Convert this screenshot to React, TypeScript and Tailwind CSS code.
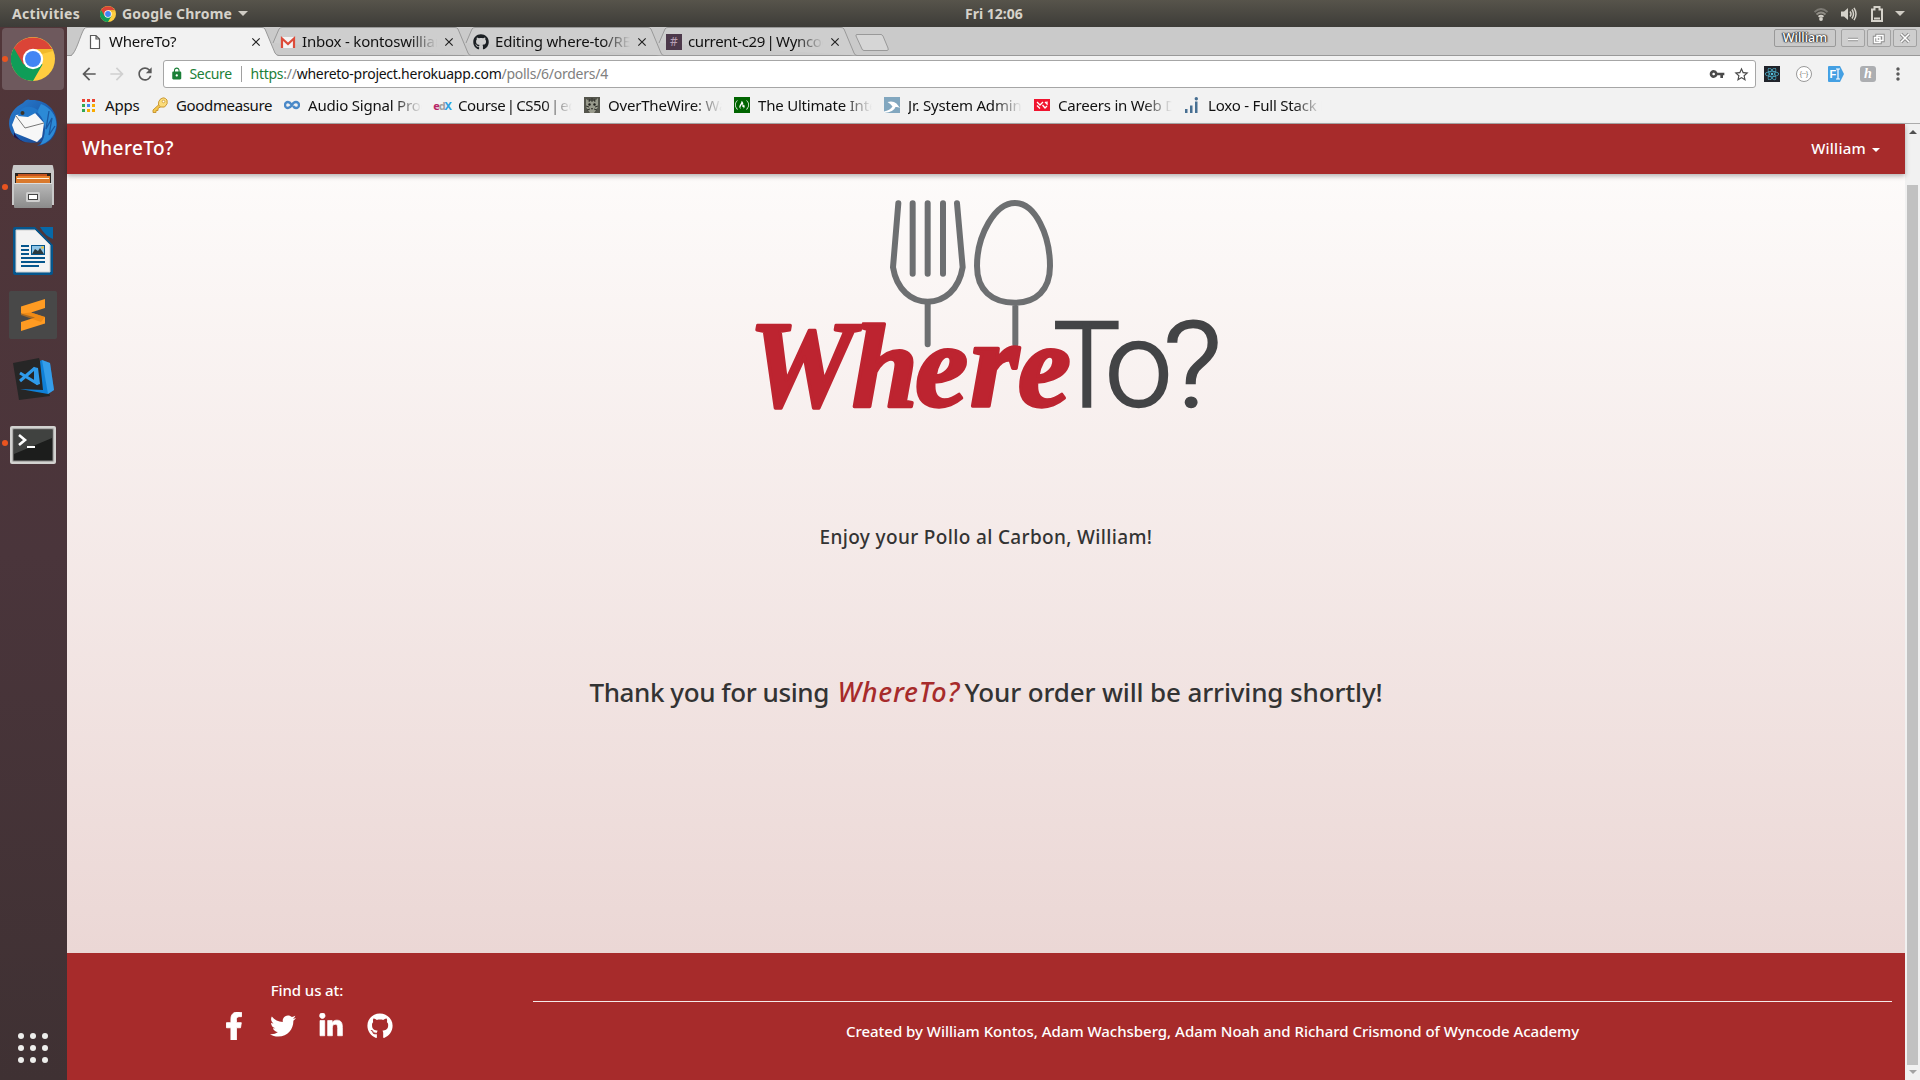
import type { ReactNode } from "react";
import { FaFacebookF, FaGithub, FaLinkedinIn, FaReact, FaTwitter, FaFreeCodeCamp } from "react-icons/fa";
import { MdArrowBack, MdArrowForward, MdRefresh, MdLock, MdStarBorder, MdVpnKey, MdMoreVert, MdClose } from "react-icons/md";

function ChromeLogo({ className }: { className: string }) {
  return (
    <svg viewBox="0 0 44 44" className={className}>
      <circle cx="22" cy="22" r="22" fill="#ffcd40" />
      <path d="M22 22 L2.9 11 A22 22 0 0 0 22 44 L31.5 27.5 Z" fill="#0f9d58" />
      <path d="M22 22 L12.5 27.5 L2.9 11 A22 22 0 0 1 41.1 12 L22 12 Z" fill="#db4437" />
      <path d="M22 12 H41.1 L42 14 L31 17Z" fill="#f1b92b" />
      <circle cx="22" cy="22" r="10.2" fill="#fff" />
      <circle cx="22" cy="22" r="8" fill="#4285f4" />
    </svg>
  );
}

function ThunderbirdIcon() {
  return (
    <svg viewBox="0 0 48 48" className="size-12">
      <defs>
        <linearGradient id="tb" x1="0" y1="0" x2="1" y2="1">
          <stop offset="0" stopColor="#2a7fd0" />
          <stop offset="0.5" stopColor="#1d5fb0" />
          <stop offset="1" stopColor="#1b3f86" />
        </linearGradient>
      </defs>
      <path d="M14 4 C17 0 20 0 21 1 C36 0 48 10 48 25 C48 37 40 46 28 47 L33 43 C17 46 1 41 0 25 C0 15 6 8 14 4Z" fill="url(#tb)" />
      <path d="M32 5 C43 9 49 19 47 29 C45 38 39 44 31 46 C38 36 38 22 28 13Z" fill="#2c8ad6" />
      <path d="M40 12 L37 30 L43 19 L40 36 L46 27" fill="none" stroke="#1a58a2" strokeWidth="1.3" />
      <path d="M5 33 C8 40 14 42 16 44 L5 38Z" fill="#1f1650" />
      <path d="M7 16 L26 14 L35 24 L33 38 L28 43 L6 34 L3 26Z" fill="#f7f7f7" />
      <path d="M7 17 L16 29 L35 24" fill="none" stroke="#777" strokeWidth="1" />
      <path d="M11 12 C15 6 24 7 30 12 L19 18 L9 17Z" fill="#2277c9" />
      <circle cx="13.5" cy="14" r="2" fill="#3a3328" />
    </svg>
  );
}

function FilesIcon() {
  return (
    <svg viewBox="0 0 42 44" className="h-11 w-[42px]">
      <defs>
        <linearGradient id="cab" x1="0" y1="0" x2="0" y2="1">
          <stop offset="0" stopColor="#b9b9b9" />
          <stop offset="1" stopColor="#8b8b8b" />
        </linearGradient>
      </defs>
      <path d="M1 1 Q1 0 2 0 H40 Q41 0 41 1 L42 6 V40 H0 V6Z" fill="#c9c9c9" />
      <rect x="3" y="8" width="36" height="11" fill="#2a2420" />
      <rect x="6" y="9" width="29" height="3" fill="#c4521e" />
      <rect x="4" y="11" width="34" height="3" fill="#e8812c" />
      <rect x="5" y="13" width="32" height="1" fill="#fff2e0" />
      <rect x="4" y="14" width="34" height="4" fill="#d9792d" />
      <rect x="2" y="18" width="38" height="25" rx="1" fill="url(#cab)" />
      <rect x="2" y="18" width="38" height="1" fill="#ddd" />
      <rect x="14" y="27" width="14" height="10" rx="1.5" fill="#cfcfcf" />
      <rect x="16.5" y="29.5" width="9" height="5" fill="#fff" stroke="#444" strokeWidth="1" />
    </svg>
  );
}

function WriterIcon() {
  return (
    <svg viewBox="0 0 40 48" className="h-12 w-10">
      <path d="M2 0 H22 L40 18 V46 Q40 48 38 48 H2 Q0 48 0 46 V2 Q0 0 2 0Z" fill="#05568d" />
      <path d="M27 0 H40 V12 Q32 9 27 0Z" fill="#0769a8" />
      <path d="M3 3 H22 L37 18 V45 H3Z" fill="#f3f3f3" stroke="#cfcfcf" strokeWidth="1" />
      <path d="M8 19 H16 M8 23 H16 M8 27 H16 M8 31 H32 M8 35 H32 M8 39 H26" stroke="#05568d" strokeWidth="1.8" />
      <rect x="18" y="18" width="14" height="10" fill="#05568d" />
      <rect x="19" y="19" width="12" height="8" fill="#8fc5e6" />
      <path d="M19 27 L22 22 L25 24 L27 21 L31 27Z" fill="#2c3a3f" />
      <circle cx="29.5" cy="20.5" r="1.3" fill="#f1c232" />
    </svg>
  );
}

function SublimeIcon() {
  return (
    <svg viewBox="0 0 48 48" className="size-12">
      <rect width="48" height="48" rx="2" fill="#484848" />
      <path d="M12 15.500 L36 8 V17 L22 21.500 L36 26 V32.500 L12 40 V31 L26 26.500 L12 22.500Z" fill="#ff9b22" />
      <path d="M12 22.500 V24 L32 31 L36 26 L22 21.500Z" fill="#e37f0d" opacity="0.6" />
    </svg>
  );
}

function VsCodeIcon() {
  return (
    <svg viewBox="0 0 42 44" className="h-11 w-[42px]">
      <path d="M1 6 L27 1 L38 39 L7 43Z" fill="#262626" />
      <path d="M30 3 L38 6 L42 33 L36 37 L8 32 L31 33 L28 4Z" fill="#0f80d7" />
      <path d="M30 3 L38 6 L42 33 L36 37Z" fill="#4fb1f5" opacity="0.6" />
      <path d="M8 16 L26 27 M8 24 L23 11" stroke="#2f9bea" strokeWidth="3" />
      <path d="M22 10 L26 11 L28 27 L25 28 L22 25Z" fill="#2f9bea" />
    </svg>
  );
}

function TerminalIcon() {
  return (
    <svg viewBox="0 0 46 38" className="h-[38px] w-[46px]">
      <rect width="46" height="38" rx="2" fill="#d2d2d0" />
      <rect x="3" y="3" width="40" height="32" fill="#1c1d1c" stroke="#8a8a88" strokeWidth="1" />
      <path d="M4 4 H42 V12 L4 28Z" fill="#4a4c4a" opacity="0.8" />
      <path d="M9 9 L15 14 L9 19" fill="none" stroke="#fff" strokeWidth="2.6" />
      <path d="M17 21 H25" stroke="#fff" strokeWidth="2" />
    </svg>
  );
}

function Launcher({ children, running, active }: { children: ReactNode; running?: boolean; active?: boolean }) {
  return (
    <div className="relative flex h-16 w-full items-center justify-center pr-px">
      {active && <div className="absolute top-px left-0.5 h-[62px] w-[62px] rounded-[4px] bg-[#6e595d]" />}
      {running && <div className="absolute top-[29px] left-0.5 size-1.5 rounded-full bg-[#e95420]" />}
      <div className="relative">{children}</div>
    </div>
  );
}

function Dock() {
  return (
    <aside className="flex w-[67px] shrink-0 flex-col items-center bg-linear-to-b from-[#513639] via-[#4a353b] to-[#3f3133]">
      <Launcher running active><ChromeLogo className="size-11" /></Launcher>
      <Launcher><ThunderbirdIcon /></Launcher>
      <Launcher running><FilesIcon /></Launcher>
      <Launcher><WriterIcon /></Launcher>
      <Launcher><SublimeIcon /></Launcher>
      <Launcher><VsCodeIcon /></Launcher>
      <Launcher running><div className="pt-1"><TerminalIcon /></div></Launcher>
      <div className="mt-auto mr-px mb-[17px] grid grid-cols-3 gap-[5.500px]">
        {Array.from({ length: 9 }, (_, i) => (
          <span key={i} className="size-[6.500px] rounded-full bg-[#eeeeec]" />
        ))}
      </div>
    </aside>
  );
}

function TopBar() {
  return (
    <header className="relative flex h-[27px] shrink-0 items-center justify-between bg-linear-to-b from-[#57544b] to-[#3d3c38] text-[14px] font-bold text-[#d6d2ca]">
      <div className="flex items-center pl-3 leading-[26px]">
        <span className="w-[88px] tracking-[0.300px]">Activities</span>
        <ChromeLogo className="size-4" />
        <span className="ml-1.5 tracking-[0.200px]">Google Chrome</span>
        <svg viewBox="0 0 10 5" className="ml-[6px] h-[5px] w-[10px]"><path d="M0 0H10L5 5Z" fill="#cfccc4" /></svg>
      </div>
      <span className="absolute left-[965px] leading-[26px]">Fri 12:06</span>
      <div className="flex items-center pr-[15px]">
        <svg viewBox="0 0 14 14" className="size-3.5 fill-none stroke-[#d5d2ca]" strokeWidth="1.800">
          <path d="M0.500 5 Q7 -1 13.500 5" opacity="0.35" />
          <path d="M2.500 7.500 Q7 3.500 11.500 7.500" opacity="0.5" />
          <path d="M4.500 9.800 Q7 7.800 9.500 9.800" />
          <circle cx="7" cy="12" r="1" />
        </svg>
        <svg viewBox="0 0 16 14" className="ml-[13px] h-3.5 w-4 fill-none stroke-[#d5d2ca]" strokeWidth="1.500">
          <path d="M0 4.500 H3 L7 1 V13 L3 9.500 H0Z" fill="#d5d2ca" stroke="none" />
          <path d="M9 4.500 Q11 7 9 9.500 M11 2.500 Q14 7 11 11.500 M13 0.800 Q17 7 13 13.200" />
        </svg>
        <svg viewBox="0 0 12 16" className="ml-[14px] h-4 w-3 fill-none stroke-[#d5d2ca]" strokeWidth="2">
          <path d="M1 3.500 H3.500 V1 H8.500 V3.500 H11 V15 H1Z M3 12.500 H9" />
        </svg>
        <svg viewBox="0 0 10 5" className="ml-3 h-[5px] w-[10px]"><path d="M0 0H10L5 5Z" fill="#cfccc4" /></svg>
      </div>
    </header>
  );
}

function TabIcon({ name }: { name: string }) {
  if (name === "page")
    return (
      <svg viewBox="0 0 16 16" className="size-4 fill-white stroke-[#5a5a5a]" strokeWidth="1.200">
        <path d="M3.500 1.500 H9 L12.500 5 V14.500 H3.500Z M9 1.500 V5 H12.500" />
      </svg>
    );
  if (name === "gmail")
    return (
      <svg viewBox="0 0 16 16" className="size-4">
        <rect x="1" y="3" width="14" height="11" fill="#f4f4f4" />
        <path d="M2 14 V4.500 L8 10 L14 4.500 V14" fill="none" stroke="#dd4b39" strokeWidth="2.200" />
      </svg>
    );
  if (name === "github") return <FaGithub className="size-4 text-[#1b1f23]" />;
  return <span className="flex size-4 items-center justify-center bg-[#4d394b] text-[12px] leading-4 text-[#b9a0b5]">#</span>;
}

const tabs = [
  { icon: "page", title: "WhereTo?" },
  { icon: "gmail", title: "Inbox - kontoswilliam" },
  { icon: "github", title: "Editing where-to/REA" },
  { icon: "slack", title: "current-c29 | Wyncod" },
];

function TabStrip() {
  return (
    <div className="flex h-[29px] items-start justify-between bg-[#cacaca] shadow-[inset_0_-1px_0_#999]">
      <div className="flex pl-[5px]">
        {tabs.map((t, i) => (
          <div key={t.title} className="relative flex h-[29px] w-[193px] items-center pl-[15px]">
            <svg viewBox="0 0 206 29" className="absolute top-0 left-0 h-[29px] w-[206px] overflow-visible">
              {i === 0 ? (
                <>
                  <path d="M-1 29 C4 27 8 9 12 2 Q13 0.500 15 0.500 H190 Q192 0.500 193 2 L203 26 Q204.500 29 207 29Z" fill="#f2f2f2" />
                  <path d="M-5 28.500 H-1 C4 26 8 9 12 2 Q13 0.500 15 0.500 H190 Q192 0.500 193 2 L203 26 Q204.500 28.500 207 28.500" fill="none" stroke="#999" />
                </>
              ) : (
                <path d="M8 16 L14 2 Q15 0.500 17 0.500 H190 Q192 0.500 193 2 L203 26 Q204 28.500 206 28.500" fill="#cecece" stroke="#999" />
              )}
            </svg>
            <div className="relative flex items-center pt-px">
              <TabIcon name={t.icon} />
              <span className={`mb-px ml-1.5 w-[135px] overflow-hidden mask-r-from-80% text-[15px] leading-[27px] whitespace-nowrap text-[#111] ${t.icon === "slack" ? "tracking-[-0.350px] [word-spacing:-2px]" : "tracking-[-0.200px]"}`}>{t.title}</span>
              <MdClose className="ml-[5px] size-3.5 text-[#222]" />
            </div>
          </div>
        ))}
        <svg viewBox="0 0 36 20" className="mt-1.5 ml-[10px] h-5 w-9">
          <path d="M3 1.500 H27 Q28 1.500 29 3 L34 15 Q35 17.500 33 17.500 H10 Q8.500 17.500 8 16 L2 3 Q1.500 1.500 3 1.500Z" fill="#d6d6d6" stroke="#999" />
        </svg>
      </div>
      <div className="flex gap-0.5 pt-0.5 pr-[3px]">
        <div className="mr-[3px] flex h-[18px] w-[62px] items-center justify-center rounded-[2px] border border-[#999] text-[12.500px] font-medium text-white [text-shadow:0_0_1px_#222,0_0_2px_#333,1px_0_1px_#444,-1px_0_1px_#444]">William</div>
        {["M7 10.500H17", "M10 6.500H16V11.500H10Z M7.500 8.500H13V13.500H7.500Z", "M8 5L16 13M16 5L8 13"].map((d) => (
          <div key={d} className="h-[18px] w-6 rounded-[2px] border border-[#a2a2a2] bg-[#cecece]">
            <svg viewBox="0 0 24 18" className="-mt-px -ml-px h-[18px] w-6 fill-none">
              <path d={d} stroke="#8d8d8d" strokeWidth="3.400" />
              <path d={d} stroke="#fff" strokeWidth="1.500" />
            </svg>
          </div>
        ))}
      </div>
    </div>
  );
}

function AddressBar() {
  return (
    <div className="flex h-7 items-center text-[#5a5a5a]">
      <MdArrowBack className="ml-3 size-5" />
      <MdArrowForward className="ml-2 size-5 text-[#d0d0d0]" />
      <MdRefresh className="ml-2 size-5" />
      <div className="ml-2 flex h-7 w-[1593px] items-center rounded-[3px] border border-[#a6a6a6] bg-white text-[14px] leading-[26px]">
        <MdLock className="ml-[6px] size-[13.500px] text-[#1a7f37]" />
        <span className="ml-[6px] w-[51px] tracking-[-0.350px] text-[#1c8038]">Secure</span>
        <span className="h-4 w-px bg-[#a0a0a0]" />
        <span className="ml-[9px] flex-1 tracking-[-0.260px] text-[#808080]">
          <span className="text-[#1c8038]">https</span>://<span className="text-[#111]">whereto-project.herokuapp.com</span>/polls/6/orders/4
        </span>
        <MdVpnKey className="size-4 text-[#4a4a4a]" />
        <MdStarBorder className="mr-[5px] ml-[8px] size-[17px] text-[#4a4a4a]" />
      </div>
      <span className="ml-2 flex size-4 items-center justify-center bg-[#20232a]"><FaReact className="size-3.5 text-[#53c1de]" /></span>
      <span className="ml-4 flex size-4 items-center justify-center rounded-full border border-[#999] bg-white text-[7px] text-[#777]">{"{··}"}</span>
      <svg viewBox="0 0 16 16" className="ml-4 size-4">
        <path d="M1 0H12L16 8L12 16H1Q0 16 0 15V1Q0 0 1 0Z" fill="#44a0e3" />
        <text x="1.500" y="12" fontSize="11" fontWeight="bold" fill="#fff" className="font-['Liberation_Sans']">F</text>
        <path d="M8 3H12M10 3V13M8 13H12" stroke="#fff" strokeWidth="1.200" />
      </svg>
      <span className="ml-4 flex size-4 items-center justify-center rounded-[3px] bg-[#acaeb1] font-['Liberation_Serif'] text-[14px] leading-none font-bold text-white italic">h</span>
      <MdMoreVert className="ml-3 size-5" />
    </div>
  );
}

function BookmarkIcon({ name }: { name: string }) {
  switch (name) {
    case "key":
      return (
        <svg viewBox="0 0 16 16" className="size-4">
          <path d="M7 7.500 L1 13 V15.500 H4 V13.500 H6 V11.500 L9 9.500 Z" fill="#f5c94e" stroke="#c4902a" strokeWidth="0.900" />
          <path d="M8 2.500 Q12 -1 15 3 Q16.500 7 12.500 10 Q8 11 6.500 8 Q6 4.500 8 2.500Z" fill="#fbdc7a" stroke="#c4902a" strokeWidth="0.900" />
          <circle cx="11.500" cy="4.500" r="1.300" fill="#fff" stroke="#c4902a" strokeWidth="0.700" />
        </svg>
      );
    case "coursera":
      return (
        <svg viewBox="0 0 16 16" className="size-4">
          <path d="M8 8 C6 5.500 5 5 4 5 A3 3 0 0 0 4 11 C6 11 7 9.500 8 8 C9 6 10.500 5 12 5 A3 3 0 0 1 12 11 C11 11 10 10.500 9 9" fill="none" stroke="#4a89c8" strokeWidth="2.300" />
        </svg>
      );
    case "edx":
      return (
        <span className="flex size-4 items-center justify-center text-[11px] leading-none font-bold tracking-[-1.200px]">
          <span className="text-[#b72667]">e</span><span className="text-[#a0a0a0]">d</span><span className="text-[#2ba1e0]">X</span>
        </span>
      );
    case "cat":
      return (
        <svg viewBox="0 0 16 16" className="size-4">
          <rect width="16" height="16" fill="#54554c" />
          <path d="M2 2 L5 4 H11 L14 1 V10 L10 16 H6 L2 10Z" fill="#989a8c" />
          <path d="M5 5 L6 2 M8 5V1 M11 5L10 2 M2 9L5 10 M14 9L11 10 M3 13L6 12 M13 13L10 12" stroke="#33342e" />
          <circle cx="5.500" cy="7.500" r="1.200" fill="#20211d" />
          <circle cx="10.500" cy="7.500" r="1.200" fill="#20211d" />
          <path d="M7 11H9L8 13Z" fill="#2b2b26" />
        </svg>
      );
    case "fcc":
      return <span className="flex size-4 items-center justify-center bg-[#006400]"><FaFreeCodeCamp className="size-3.5 text-white" /></span>;
    case "bird":
      return (
        <svg viewBox="0 0 16 16" className="size-4">
          <rect width="16" height="16" fill="#82a7bf" />
          <path d="M3.500 5 Q9 3.500 12.500 6.500 L16 11 Q13.500 9.500 11.500 10 Q10 15 0 16 V14.500 Q6 13.500 8.500 9.500 Q6.500 6.500 3.500 5Z" fill="#fff" />
        </svg>
      );
    case "careers":
      return (
        <svg viewBox="0 0 16 16" className="size-4">
          <rect y="2" width="16" height="12" fill="#f0142f" />
          <path d="M3 5L6 8L9 5 M3 8.500L6 11.500 M8.500 8L11 11L13 9 M11 5L13 7V4.500" fill="none" stroke="#fff" strokeWidth="1.300" />
        </svg>
      );
    default:
      return (
        <svg viewBox="0 0 16 16" className="size-4 fill-[#476f92]">
          <path d="M1 12H3.500V16H1Z M6 8.500H8.500V16H6Z M11 4.500H13.500V16H11Z" />
          <circle cx="12.300" cy="1.700" r="1.700" />
        </svg>
      );
  }
}

const bookmarks = [
  { icon: "coursera", title: "Audio Signal Proc" },
  { icon: "edx", title: "Course | CS50 | edX" },
  { icon: "cat", title: "OverTheWire: War" },
  { icon: "fcc", title: "The Ultimate Inter" },
  { icon: "bird", title: "Jr. System Admini" },
  { icon: "careers", title: "Careers in Web De" },
  { icon: "loxo", title: "Loxo - Full Stack D" },
];

const appColors = ["bg-[#ea4335]", "bg-[#ea4335]", "bg-[#ea4335]", "bg-[#34a853]", "bg-[#4285f4]", "bg-[#f9ab00]", "bg-[#34a853]", "bg-[#f9ab00]", "bg-[#f9ab00]"];

function BookmarkBar() {
  return (
    <div className="mt-0.5 flex h-[30px] items-center pl-[15px] text-[15px] leading-[30px] tracking-[-0.200px] text-[#111]">
      <div className="grid grid-cols-3 gap-[2px]">
        {appColors.map((c, i) => <span key={i} className={`size-[3px] ${c}`} />)}
      </div>
      <span className="ml-2.5 w-[47px]">Apps</span>
      <BookmarkIcon name="key" />
      <span className="ml-2 w-[108px] tracking-[-0.350px]">Goodmeasure</span>
      {bookmarks.map((b) => (
        <div key={b.icon} className="flex w-[150px] items-center">
          <BookmarkIcon name={b.icon} />
          <span className={`ml-2 w-[114px] overflow-hidden mask-r-from-75% whitespace-nowrap ${b.icon === "edx" ? "tracking-[-0.400px] [word-spacing:-2px]" : ""}`}>{b.title}</span>
        </div>
      ))}
    </div>
  );
}

function Logo() {
  return (
    <svg viewBox="0 0 1500 750" className="mt-1.5 ml-2 h-[250px] w-[500px] shrink-0">
      <g fill="none" stroke="#6d6f71" strokeWidth="18" strokeLinecap="round" strokeLinejoin="round">
        <path d="M475 70 L459 262 C470 330 515 365 563 365 C612 365 657 330 668 262 L651 70" />
        <path d="M518 70V281 M563 70V281 M609 70V281 M563 373V493" />
        <path d="M825 69 C885 69 930 165 930 258 C930 330 888 368 825 368 C755 368 711 330 711 258 C711 165 765 69 825 69Z M826 373V493" />
      </g>
      <g fill="#bd2430" stroke="#bd2430" strokeWidth="10" strokeLinejoin="round" className="font-['Liberation_Serif'] font-bold italic">
        <text x="26" y="678" fontSize="366" textLength="316" lengthAdjust="spacingAndGlyphs">W</text>
        <text x="336" y="678" fontSize="356">h</text>
        <text x="526" y="678" fontSize="356">e</text>
        <text x="690" y="678" fontSize="376">r</text>
        <text x="834" y="678" fontSize="356">e</text>
      </g>
      <g fill="#434446" stroke="#434446" strokeWidth="7" fontSize="354" className="font-['Roboto'] font-light">
        <text x="940" y="677" textLength="201" lengthAdjust="spacingAndGlyphs">T</text>
        <text x="1095" y="677" textLength="202" lengthAdjust="spacingAndGlyphs">o</text>
        <text x="1270" y="677" textLength="176" lengthAdjust="spacingAndGlyphs">?</text>
      </g>
    </svg>
  );
}

function Page() {
  return (
    <main className="flex min-w-0 flex-1 flex-col font-medium">
      <nav className="relative z-10 flex h-[50px] shrink-0 items-center justify-between bg-[#a72b2b] pr-[25px] pb-px pl-[15px] text-white shadow-[0_2px_5px_rgba(0,0,0,0.300)]">
        <span className="text-[19px] tracking-[0.400px]">WhereTo?</span>
        <span className="flex items-center text-[15px] tracking-[0.250px]">
          William
          <svg viewBox="0 0 8 4" className="mt-0.5 ml-1.5 h-1 w-2"><path d="M0 0H8L4 4Z" fill="#fff" /></svg>
        </span>
      </nav>
      <section className="flex h-[779px] shrink-0 flex-col items-center bg-linear-to-b from-[#fdfbfa] to-[#ebd7d5] text-[#333]">
        <Logo />
        <p className="mt-[93px] text-[19px] leading-7 tracking-[0.350px]">Enjoy your Pollo al Carbon, William!</p>
        <h2 className="mt-[123px] flex text-[26px] leading-9 whitespace-pre">
          <span className="w-[248px] tracking-[-0.420px]">Thank you for using</span>
          <span className="w-[127px] text-[27px] tracking-[0.750px] text-[#a72b2b] italic">WhereTo?</span>
          <span className="tracking-[-0.140px]">Your order will be arriving shortly!</span>
        </h2>
      </section>
      <footer className="flex flex-1 bg-[#a72b2b] text-[15px] text-white">
        <div className="flex w-[466px] shrink-0 flex-col items-center pt-[25px] pl-[14px]">
          <span className="leading-6 tracking-[-0.100px]">Find us at:</span>
          <div className="mt-[10px] mr-[-2px] flex items-center">
            <FaFacebookF className="h-7 w-[20px] stroke-white stroke-[16]" />
            <FaTwitter className="ml-[26px] size-[26px]" />
            <FaLinkedinIn className="ml-[22px] size-[26px] stroke-white stroke-[14]" />
            <FaGithub className="ml-[23px] size-[26px]" />
          </div>
        </div>
        <div className="mr-[13px] flex-1 pt-12 text-center">
          <div className="h-px bg-[#f5e9e9]" />
          <p className="mt-[17px] leading-6 tracking-[-0.020px]">Created by William Kontos, Adam Wachsberg, Adam Noah and Richard Crismond of Wyncode Academy</p>
        </div>
      </footer>
    </main>
  );
}

function Scrollbar() {
  return (
    <div className="flex w-[15px] shrink-0 flex-col items-center bg-[#f1f1f1] py-1.5">
      <svg viewBox="0 0 8 4" className="h-1 w-2"><path d="M0 4H8L4 0Z" fill="#505050" /></svg>
      <div className="mt-[51px] mb-[5px] w-[11px] flex-1 bg-[#c1c1c1]" />
      <svg viewBox="0 0 8 4" className="h-1 w-2"><path d="M0 0H8L4 4Z" fill="#a3a3a3" /></svg>
    </div>
  );
}

export default function App() {
  return (
    <div className="flex h-[1080px] w-[1920px] flex-col overflow-hidden font-['Noto_Sans',sans-serif]">
      <TopBar />
      <div className="flex min-h-0 flex-1">
        <Dock />
        <div className="flex min-w-0 flex-1 flex-col">
          <TabStrip />
          <div className="h-[68px] shrink-0 border-b border-[#ababab] bg-[#f2f2f2] pt-1">
            <AddressBar />
            <BookmarkBar />
          </div>
          <div className="flex min-h-0 flex-1">
            <Page />
            <Scrollbar />
          </div>
        </div>
      </div>
    </div>
  );
}
